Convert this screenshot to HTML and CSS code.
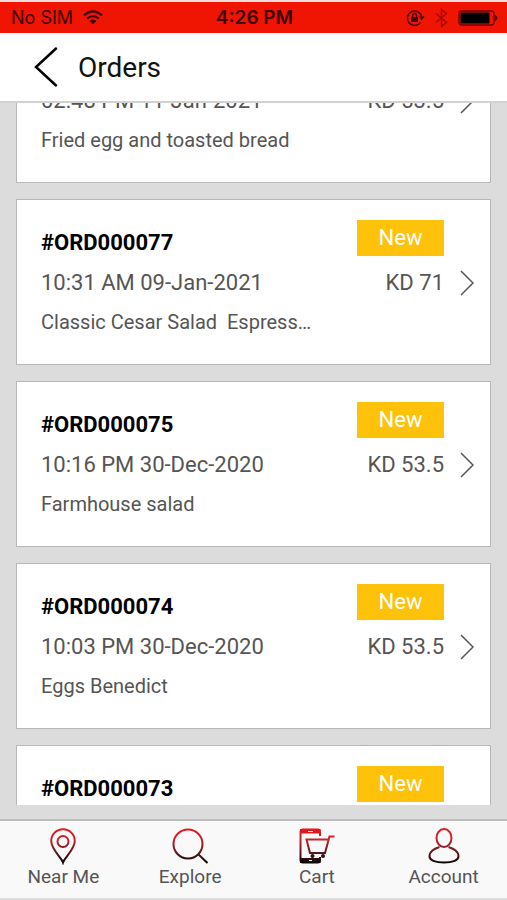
FILE: index.html
```html
<!DOCTYPE html>
<html lang="en">
<head>
<meta charset="utf-8">
<meta name="viewport" content="width=device-width, initial-scale=1">
<title>Orders</title>
<link rel="stylesheet" href="styles.css">
</head>
<body>
<div class="status">
  <div class="status-side">
    <span>No SIM</span>
    <svg width="20" height="15" viewBox="0 0 20 15" fill="none" stroke="#3d0300" stroke-width="2.3" aria-hidden="true"><path d="M1 5.4Q10-2.6 19 5.4M4.2 8.6Q10 3.6 15.8 8.6"/><path d="M10 14.3L6.6 11Q10 8 13.4 11Z" fill="#3d0300" stroke="none"/></svg>
  </div>
  <strong class="clock">4:26 PM</strong>
  <div class="status-side status-right">
    <svg width="19" height="18" viewBox="0 0 19 18" fill="none" stroke="#3d0300" stroke-width="1.4" aria-hidden="true"><path d="M14.4 13.5A7.2 7.2 0 1 1 15.7 8"/><path d="M12.8 7.5H18.6L15.7 11Z" fill="#3d0300" stroke="none"/><path d="M5.2 8H12v5H5.2Z" fill="#3d0300" stroke="none"/><path d="M6.7 8V6.4a1.9 1.9 0 0 1 3.8 0V8"/></svg>
    <svg width="13" height="20" viewBox="0 0 13 20" fill="none" stroke="#a30a04" stroke-width="1.4" aria-hidden="true"><path d="M1 5.5L11.5 14.5L6.5 18.5V1.5L11.5 5.5L1 14.5"/></svg>
    <svg width="40" height="16" viewBox="0 0 40 16" aria-hidden="true"><rect x="1" y="1" width="35" height="14" rx="3" fill="none" stroke="#6b0500" stroke-width="1.4"/><rect x="2.5" y="2.5" width="29" height="11" rx="1" fill="#000"/><path d="M37 5Q39.500 6 39.500 8T37 11Z" fill="#3d0300"/></svg>
  </div>
</div>
<header class="header">
  <button class="back" type="button" aria-label="Back"><svg width="24" height="42" viewBox="0 0 24 42" fill="none" stroke="#000" stroke-width="2.5" stroke-linecap="round"><path d="M22 2.500L2 21L22 39.500"/></svg></button>
  <h1>Orders</h1>
</header>
<main class="orders">
  <ul class="order-list">
    <li><a class="card card-scrolled" href="#ORD000078">
      <span class="line">02:48 PM 11-Jan-2021</span><span class="price">KD 53.5</span>
      <svg class="chevron" viewBox="0 0 14 26"><path d="M1 1L13 13L1 25"/></svg>
      <span class="items">Fried egg and toasted bread</span>
    </a></li>
    <li><a class="card" href="#ORD000077">
      <strong class="number">#ORD000077</strong><span class="badge">New</span>
      <span class="line">10:31 AM 09-Jan-2021</span><span class="price">KD 71</span>
      <svg class="chevron" viewBox="0 0 14 26"><path d="M1 1L13 13L1 25"/></svg>
      <span class="items">Classic Cesar Salad&nbsp; Espress…</span>
    </a></li>
    <li><a class="card" href="#ORD000075">
      <strong class="number">#ORD000075</strong><span class="badge">New</span>
      <span class="line">10:16 PM 30-Dec-2020</span><span class="price">KD 53.5</span>
      <svg class="chevron" viewBox="0 0 14 26"><path d="M1 1L13 13L1 25"/></svg>
      <span class="items">Farmhouse salad</span>
    </a></li>
    <li><a class="card" href="#ORD000074">
      <strong class="number">#ORD000074</strong><span class="badge">New</span>
      <span class="line">10:03 PM 30-Dec-2020</span><span class="price">KD 53.5</span>
      <svg class="chevron" viewBox="0 0 14 26"><path d="M1 1L13 13L1 25"/></svg>
      <span class="items">Eggs Benedict</span>
    </a></li>
    <li><a class="card" href="#ORD000073">
      <strong class="number">#ORD000073</strong><span class="badge">New</span>
    </a></li>
  </ul>
</main>
<nav class="tabs">
  <a href="#near">
    <svg width="38" height="38" viewBox="0 0 38 38" fill="none" stroke="url(#fade)" stroke-width="2" aria-hidden="true">
      <defs><linearGradient id="fade" gradientUnits="userSpaceOnUse" x1="0" y1="2" x2="0" y2="36"><stop offset="0" stop-color="#e8141c"/><stop offset=".3" stop-color="#c8242a"/><stop offset=".7" stop-color="#5c171b"/><stop offset="1" stop-color="#080606"/></linearGradient></defs>
      <path d="M19 35.500C17.500 31 7.200 22 7.200 14A11.800 11.800 0 0 1 30.800 14C30.800 22 20.500 31 19 35.500Z"/><circle cx="19" cy="14.500" r="5.500"/></svg>
    <span>Near Me</span></a>
  <a href="#explore">
    <svg width="38" height="38" viewBox="0 0 38 38" fill="none" stroke="url(#fade)" stroke-width="2" aria-hidden="true"><circle cx="17" cy="17" r="14.500"/><path d="M27 27L36.500 36"/></svg>
    <span>Explore</span></a>
  <a href="#cart">
    <svg width="38" height="38" viewBox="0 0 38 38" fill="none" stroke="url(#fade)" stroke-width="2" aria-hidden="true"><path d="M22 9V5Q22 2.500 19.500 2.500H5Q2.500 2.500 2.500 5V33Q2.500 35.500 5 35.500H19.500Q22 35.500 22 33V30"/><path d="M3 3H21.500V5.500H3ZM3 32H21.500V35H3Z" fill="url(#fade)"/><path d="M10 4.500H15M11 33.500H14" stroke="#f9f9f9" stroke-width="1"/><path d="M36.500 9.500H31.500L27 26H12L8.500 12.500H30"/><circle cx="14.500" cy="29" r="2" fill="#301013" stroke="none"/><circle cx="25" cy="29" r="2" fill="#301013" stroke="none"/></svg>
    <span>Cart</span></a>
  <a href="#account">
    <svg width="38" height="38" viewBox="0 0 38 38" fill="none" stroke="url(#fade)" stroke-width="2" aria-hidden="true"><ellipse cx="19" cy="11" rx="7.500" ry="9"/><path d="M14.500 20C9 22 4.500 24 4.500 29.500C4.500 33 10 35.500 19 35.500S33.500 33 33.500 29.500C33.500 24 29 22 23.500 20"/></svg>
    <span>Account</span></a>
</nav>
</body>
</html>
```
FILE: styles.css
```css
* { box-sizing: border-box; }
body {
  margin: 0;
  height: 100vh;
  display: flex;
  flex-direction: column;
  overflow: hidden;
  font-family: Roboto, sans-serif;
  color: #555;
  background: #fff;
}
a { color: inherit; text-decoration: none; }
svg { display: block; flex: none; }
.status {
  flex: none;
  display: grid;
  grid-template-columns: 1fr auto 1fr;
  align-items: center;
  height: 33px;
  padding: 0 9px 0 11px;
  border-top: 2px solid #f6dcda;
  background: #f01402;
  color: #3d0300;
  font: 18px/31px Inter, sans-serif;
}
.status-side { display: flex; align-items: center; gap: 10px; }
.status-right { justify-content: flex-end; }
.clock { font-size: 19px; font-weight: 600; }
.header {
  flex: none;
  display: flex;
  align-items: center;
  gap: 20px;
  height: 70px;
  padding: 0 34px;
  border-bottom: 2px solid #d2d2d2;
}
.back { padding: 0; border: 0; background: none; }
h1 { margin: 0; color: #111; font-size: 28px; font-weight: 400; }
.orders {
  flex: 1;
  min-height: 0;
  overflow: hidden;
  padding: 0 16px;
  background: #dcdcdc;
  border-bottom: 14px solid #dcdcdc;
}
/* The list is shown scrolled part of the way through its first card. */
.order-list {
  display: flex;
  flex-direction: column;
  gap: 16px;
  margin: -23px 0 0;
  padding: 0;
  list-style: none;
}
.card {
  display: grid;
  grid-template-columns: 1fr 87px 14px;
  grid-template-rows: 43px 40px 38px;
  column-gap: 16px;
  padding: 20px 16px 23px 24px;
  border: 1px solid #b8b8b8;
  background: #fff;
  font-size: 22px;
  line-height: 40px;
}
.card-scrolled {
  grid-template-rows: 40px 38px;
  padding-top: 0;
}
.number { align-self: end; color: #000; }
.badge {
  grid-column: 2 / 3;
  align-self: start;
  background: #ffc20a;
  color: #fff;
  line-height: 36px;
  text-align: center;
}
.line { grid-column: 1; }
.price { text-align: right; }
.chevron {
  align-self: center;
  width: 14px;
  height: 26px;
  fill: none;
  stroke: #555;
  stroke-width: 1.5;
}
.items { grid-column: 1; font-size: 20px; line-height: 38px; white-space: nowrap; }
.tabs {
  flex: none;
  display: grid;
  grid-template-columns: repeat(4, 1fr);
  height: 81px;
  padding-top: 6px;
  border-top: 2px solid #bcbcbc;
  border-bottom: 2px solid #dedede;
  background: #f9f9f9;
}
.tabs a {
  display: flex;
  flex-direction: column;
  align-items: center;
  font-size: 19px;
  line-height: 24px;
}
```
